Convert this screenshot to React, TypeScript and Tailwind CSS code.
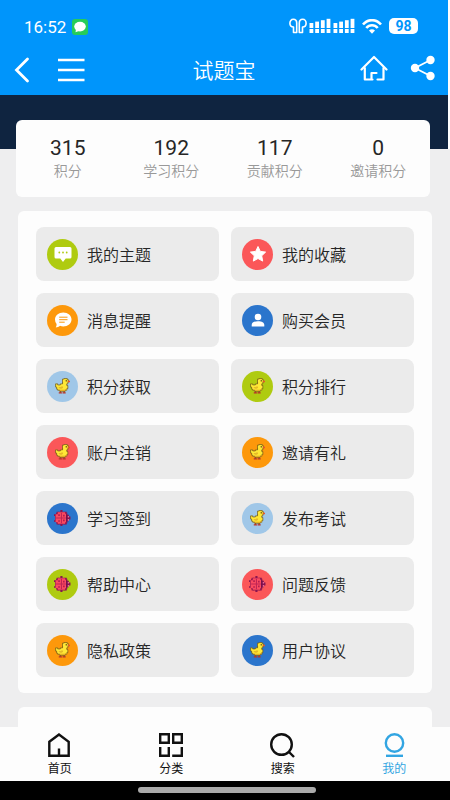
import { ReactNode } from "react";

const Chick = () => (
  <svg viewBox="0 0 28 30" className="w-[15px] h-4">
    <path d="M10 24v4H7M17 24v4h-3M10 28h3M17 28h3" fill="none" stroke="#b5372a" strokeWidth="2.400" />
    <path
      d="M15 2h2V1h6v2h2v5h-1v3h-2v3h2v6h-2v3h-3v2H9v-2H5v-2H3v-4H1v-6h4v2h5v-2h4v-2h1V9h-1V2z"
      fill="#ffe836"
      stroke="#6b5418"
      strokeWidth="1.300"
    />
    <path d="M7 17h4v-1h4v3h-2v1H9v-1H7z" fill="#e6bb28" />
    <path d="M7 22h12v-1h3v2h-4v1H10v-1H7z" fill="#dfa422" />
    <rect x="20" y="4" width="2" height="2.500" fill="#3d2f10" />
    <path d="M24 5h4v3h-4z" fill="#e8542c" />
  </svg>
);

const Ladybug = () => (
  <svg viewBox="0 0 32 30" className="w-[17px] h-4">
    <g fill="#8a1450">
      <path d="M5 3h4v24H5zM20 3h4v24h-4zM12 0h4v30h-4zM0 8h4v3H0zM0 19h4v3H0z" />
      <path d="M8 3h13v2h4v4h3v3h3v6h-3v3h-3v4h-4v2H8v-2H4v-4H2V9h2V5h4z" />
    </g>
    <path d="M7 4h14v3h2v16h-2v3H7v-3H3V8h4z" fill="#fb4a60" />
    <path d="M13 5h2v20h-2zM4 14h18v2H4z" fill="#c02555" />
    <path d="M8 8h3v3H8zM8 19h3v3H8zM17 9h3v3h-3zM17 18h3v3h-3z" fill="#b01e50" />
    <path d="M23 8h2v14h-2z" fill="#6a0f4c" />
    <path d="M26 11h2v3h-2zM26 17h2v3h-2z" fill="#f27aa4" />
  </svg>
);

const Comment = () => (
  <svg viewBox="0 0 18 18" className="w-[18px] h-[18px]">
    <path
      d="M2 2h14a1.500 1.500 0 0 1 1.500 1.500v8.500a1.500 1.500 0 0 1-1.500 1.500h-4.300L9 17l-2.700-3.500H2A1.500 1.500 0 0 1 .5 12V3.500A1.500 1.500 0 0 1 2 2z"
      fill="#fff"
    />
    <g fill="#afcb10">
      <circle cx="5.300" cy="7.500" r="0.900" />
      <circle cx="9" cy="7.500" r="0.900" />
      <circle cx="12.700" cy="7.500" r="0.900" />
    </g>
  </svg>
);

const Message = () => (
  <svg viewBox="0 0 18 18" className="w-[18px] h-[18px]">
    <path
      d="M9.300 1.500c4.600 0 8.200 3.100 8.200 7s-3.600 7-8.200 7c-1.200 0-2.300-.2-3.300-.7-1.200 1-2.700 1.600-4.200 1.700.6-1 .9-2.200.8-3.500A6.800 6.800 0 0 1 1 8.500c0-3.900 3.700-7 8.300-7z"
      fill="#fff"
    />
    <path d="M5.200 6.200h8.300M5.200 8.700h8.300M5.200 11.200h5.500" stroke="#fa980c" strokeWidth="1" />
  </svg>
);

const Star = () => (
  <svg viewBox="0 0 18 18" className="w-[18px] h-[18px]">
    <path
      d="M9 1.500l2.300 4.900 5.300.7-3.900 3.700 1 5.300L9 13.500l-4.700 2.600 1-5.300-3.900-3.700 5.300-.7z"
      fill="#fff"
      stroke="#fff"
      strokeWidth="1"
      strokeLinejoin="round"
    />
  </svg>
);

const Person = () => (
  <svg viewBox="0 0 18 18" className="w-[18px] h-[18px]">
    <circle cx="9" cy="6" r="3.300" fill="#fff" />
    <path d="M2.700 15.500v-1.500c0-2.300 2.300-3.800 6.300-3.800s6.300 1.500 6.300 3.800v1.500z" fill="#fff" />
  </svg>
);

const stats = [
  { value: 315, label: "积分" },
  { value: 192, label: "学习积分" },
  { value: 117, label: "贡献积分" },
  { value: 0, label: "邀请积分" },
];

const green = "bg-[#afcb10]";
const red = "bg-[#fb5759]";
const orange = "bg-[#fd980b]";
const blue = "bg-[#2b75cc]";
const sky = "bg-[#a0c7e8]";

const menu: { label: string; color: string; icon: ReactNode }[] = [
  { label: "我的主题", color: green, icon: <Comment /> },
  { label: "我的收藏", color: red, icon: <Star /> },
  { label: "消息提醒", color: orange, icon: <Message /> },
  { label: "购买会员", color: blue, icon: <Person /> },
  { label: "积分获取", color: sky, icon: <Chick /> },
  { label: "积分排行", color: green, icon: <Chick /> },
  { label: "账户注销", color: red, icon: <Chick /> },
  { label: "邀请有礼", color: orange, icon: <Chick /> },
  { label: "学习签到", color: blue, icon: <Ladybug /> },
  { label: "发布考试", color: sky, icon: <Chick /> },
  { label: "帮助中心", color: green, icon: <Ladybug /> },
  { label: "问题反馈", color: red, icon: <Ladybug /> },
  { label: "隐私政策", color: orange, icon: <Chick /> },
  { label: "用户协议", color: blue, icon: <Chick /> },
];

const tabs = [
  {
    label: "首页",
    icon: <path d="M2.300 8.800L12 1.500l9.700 7.300v14H2.300zM12 15.500v7" />,
  },
  {
    label: "分类",
    icon: (
      <path d="M1.200 1.200h8.600v8.600H1.200zM14.200 1.200h8.600v8.600h-8.600zM5 22.800H1.200V14M5 22.800h4.800V14M22.800 14v8.800h-9.600" />
    ),
  },
  {
    label: "搜索",
    icon: (
      <>
        <circle cx="11.500" cy="11.500" r="10.300" />
        <path d="M18.500 18.500l5.500 5.500" />
      </>
    ),
  },
  {
    label: "我的",
    active: true,
    icon: (
      <>
        <circle cx="12.500" cy="10" r="8.700" />
        <path d="M4 22.800h17" />
      </>
    ),
  },
];

const StatusBar = () => (
  <div className="flex items-center justify-between h-[52px] pt-[2px] pl-6 pr-[30px]">
    <div className="flex items-center gap-[6px]">
      <span className="font-[Roboto] text-[17px] leading-5">16:52</span>
      <svg viewBox="0 0 16 16" className="w-4 h-4">
        <rect width="16" height="16" rx="3" fill="#27cc58" />
        <ellipse cx="8" cy="7.600" rx="5.800" ry="4.800" fill="#fff" />
        <path d="M4 10l-.5 3.200L7 12z" fill="#fff" />
      </svg>
    </div>
    <div className="flex items-center gap-[7px] pb-[2px]">
      <svg viewBox="0 0 66 16" className="w-[66px] h-4">
        <g fill="none" stroke="#fff" strokeWidth="1.600" strokeLinejoin="round">
          <path d="M4.500 14.500V9C2 9 .9 7.300.9 5.200S2.200 1.300 4.300 1.300s3.400 1.500 3.400 3.700v9.500z" />
          <path d="M13.500 14.500V9c2.500 0 3.600-1.700 3.600-3.800s-1.300-3.900-3.400-3.900-3.400 1.500-3.400 3.700v9.500z" />
        </g>
        <g fill="#fff">
          {[0, 24].map((dx) =>
            [0, 1, 2, 3].map((i) => (
              <g key={`${dx}-${i}`}>
                <rect x={20.5 + dx + i * 5.7} y={5 - i * 1.4} width="3.800" height={5 + i * 1.4} />
                <rect x={20.5 + dx + i * 5.7} y="11" width="3.800" height="4" />
              </g>
            ))
          )}
        </g>
      </svg>
      <svg viewBox="0 0 20 15" className="w-5 h-[15px]">
        <g fill="none" stroke="#fff" strokeWidth="2.600">
          <path d="M1 5.500C6-.3 14-.3 19 5.500" />
          <path d="M4.300 9C7.500 5.300 12.500 5.300 15.700 9" />
        </g>
        <path d="M10 14.700l-3-3.300c1.800-1.600 4.200-1.600 6 0z" fill="#fff" />
      </svg>
      <span className="w-[29px] h-4 rounded-[5px] bg-white text-[#0095fb] font-[Roboto] font-bold text-sm leading-4 text-center">
        98
      </span>
    </div>
  </div>
);

const Header = () => (
  <header className="bg-[#0095fb] text-white">
    <StatusBar />
    <div className="grid grid-cols-[1fr_auto_1fr] items-start h-[43px] px-3">
      <div className="flex items-center gap-6 pt-1">
        <button aria-label="返回" className="pl-[2px] pt-px">
          <svg viewBox="0 0 16 26" className="w-4 h-[26px]" fill="none" stroke="#fff" strokeWidth="2.800" strokeLinecap="round">
            <path d="M13.500 2L2.500 13l11 11" />
          </svg>
        </button>
        <button aria-label="菜单" className="pl-[3px] pt-px">
          <svg viewBox="0 0 28 26" className="w-7 h-[26px]" stroke="#fff" strokeWidth="2.400">
            <path d="M1 3h26.500M1 13h26.500M1 23h26.500" />
          </svg>
        </button>
      </div>
      <h1 className="font-[350] text-[21px] leading-[34px]">试题宝</h1>
      <div className="flex items-center justify-end gap-[22px] pt-[3px]">
        <button aria-label="首页">
          <svg viewBox="0 0 28 26" className="w-7 h-[26px]" fill="none" stroke="#fff" strokeWidth="2.200" strokeLinecap="round" strokeLinejoin="round">
            <path d="M1.500 14.500L14 2l12.500 12.500" />
            <path d="M4.800 13v11.500h7.700M11.500 24.500v-6.500h5M17.500 24.500h6V13" />
          </svg>
        </button>
        <button aria-label="分享">
          <svg viewBox="0 0 26 26" className="w-[26px] h-[26px]" fill="#fff">
            <path d="M20.500 5L5 13l15.500 8" fill="none" stroke="#fff" strokeWidth="1.800" />
            <circle cx="20.500" cy="5" r="4.200" />
            <circle cx="5" cy="13" r="4.200" />
            <circle cx="20.500" cy="21" r="4.200" />
          </svg>
        </button>
      </div>
    </div>
  </header>
);

export default function App() {
  return (
    <div className="min-h-screen flex flex-col bg-[#eeeeef] text-[#262626] font-['Noto_Sans_CJK_SC',sans-serif]">
      <div className="bg-white pr-[2px]">
        <Header />
        <div className="h-[54px] bg-[#0f2440]" />
      </div>

      <main className="flex-1 flex flex-col gap-[14px] -mt-[29px]">
        <section className="relative ml-4 mr-5 grid grid-cols-4 rounded-md bg-[#fdfdfd] py-4 text-center">
          {stats.map((s) => (
            <div key={s.label}>
              <p className="font-[Roboto] text-[21px] leading-6">{s.value}</p>
              <p className="font-[350] text-sm leading-[21px] text-[#999999]">{s.label}</p>
            </div>
          ))}
        </section>

        <section className="mx-[18px] grid grid-cols-2 gap-3 rounded-md bg-[#fdfdfd] px-[18px] pt-4 pb-4">
          {menu.map((item) => (
            <a
              key={item.label}
              href="#"
              className="flex items-center gap-[9px] h-[54px] pl-[11px] rounded-lg bg-[#ebebeb]"
            >
              <span className={`flex items-center justify-center w-[31px] h-[31px] rounded-full ${item.color}`}>
                {item.icon}
              </span>
              <span className="font-[350] text-base">{item.label}</span>
            </a>
          ))}
        </section>

        <section className="mx-[18px] flex-1 rounded-t-md bg-[#fdfdfd]" />
      </main>

      <nav className="grid grid-cols-4 h-[54px] pl-1 pt-[6px] bg-[#fdfdfd]">
        {tabs.map((tab) => (
          <a
            key={tab.label}
            href="#"
            className={`flex flex-col items-center gap-[2px] text-xs ${tab.active ? "text-[#32a5e2]" : "text-[#111]"}`}
          >
            <svg viewBox="0 0 25 25" className="w-[25px] h-[25px]" fill="none" stroke="currentColor" strokeWidth="2.400">
              {tab.icon}
            </svg>
            {tab.label}
          </a>
        ))}
      </nav>
      <div className="flex justify-center h-[19px] pl-1 pt-[6px] bg-black">
        <div className="w-2/5 h-[6px] rounded-full bg-[#aaaaaa]" />
      </div>
    </div>
  );
}
